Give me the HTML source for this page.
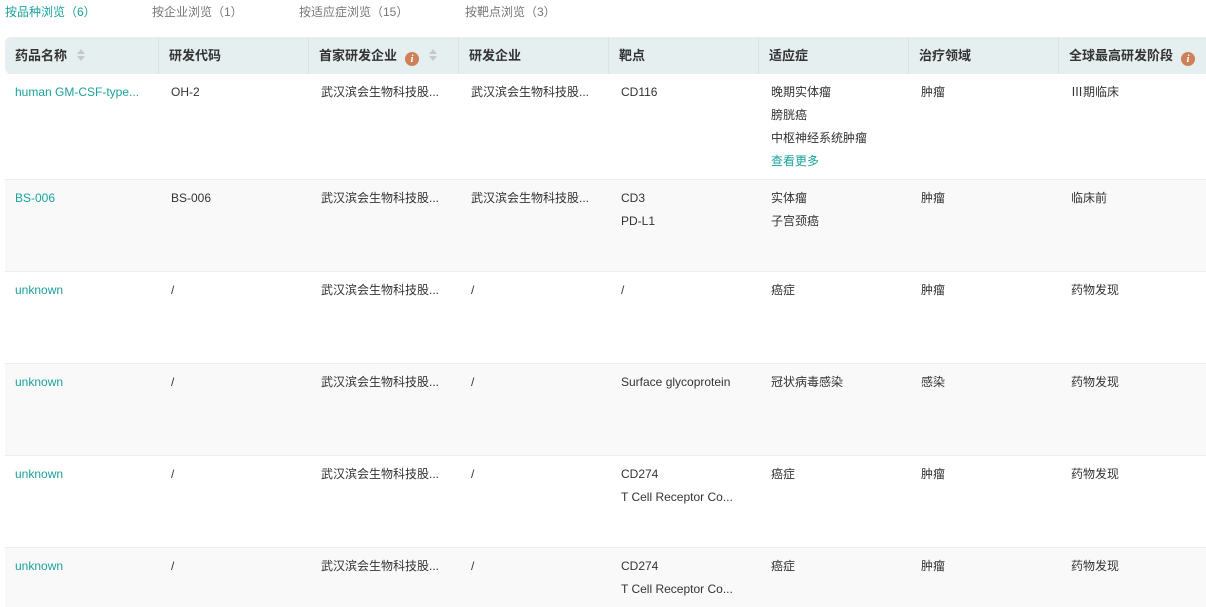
<!DOCTYPE html>
<html><head><meta charset="utf-8"><style>
*{margin:0;padding:0;box-sizing:border-box}
html,body{width:1206px;height:607px;overflow:hidden}
body{background:#fff;font-family:"Liberation Sans","Noto Sans CJK SC",sans-serif;font-size:12px;color:#333;position:relative}
.tabs{position:absolute;top:3px;left:5px;height:16px;font-size:12px;color:#777}
.tabs span{position:absolute;white-space:nowrap;top:0}
.hdr{position:absolute;top:37px;left:5px;width:1201px;height:37px;background:#e5eff0;border-radius:6px 0 0 6px}
.hc{position:absolute;top:0;height:37px;line-height:37px;font-size:13px;font-weight:bold;color:#333;padding-left:10px;border-left:1px solid #d6e6e6;white-space:nowrap}
.hc:first-child{border-left:none}
.info{display:inline-block;width:14px;height:14px;border-radius:50%;background:#d08058;color:#fff;font-size:11px;font-style:italic;font-weight:bold;line-height:14px;text-align:center;vertical-align:-2px;margin-left:8px;font-family:"Liberation Serif",serif}
.sort{display:inline-block;width:8px;height:12px;margin-left:10px;vertical-align:-1px;position:relative}
.sort:before{content:"";position:absolute;top:0;left:0;border:4px solid transparent;border-bottom:5px solid #c4c8cc;border-top:0}
.sort:after{content:"";position:absolute;bottom:0;left:0;border:4px solid transparent;border-top:5px solid #c4c8cc;border-bottom:0}
.row{position:absolute;left:5px;width:1201px;border-top:1px solid #ebedf0}
.row.g{background:#f9f9fa}
.c{position:absolute;top:7px;line-height:23px;white-space:nowrap}
.l{color:#1aa39b}
</style></head><body>
<div class="tabs">
<span style="left:0;color:#1aa39b">按品种浏览（6）</span>
<span style="left:147px">按企业浏览（1）</span>
<span style="left:294px">按适应症浏览（15）</span>
<span style="left:460px">按靶点浏览（3）</span>
</div>
<div class="hdr">
<div class="hc" style="left:0;width:153px">药品名称<span class="sort"></span></div>
<div class="hc" style="left:153px;width:150px">研发代码</div>
<div class="hc" style="left:303px;width:150px">首家研发企业<span class="info">i</span><span class="sort"></span></div>
<div class="hc" style="left:453px;width:150px">研发企业</div>
<div class="hc" style="left:603px;width:150px">靶点</div>
<div class="hc" style="left:753px;width:150px">适应症</div>
<div class="hc" style="left:903px;width:150px">治疗领域</div>
<div class="hc" style="left:1053px;width:148px">全球最高研发阶段<span class="info">i</span></div>
</div>

<div class="row" style="top:74px;height:105px;border-top:none">
<div class="c l" style="left:10px">human GM-CSF-type...</div>
<div class="c" style="left:166px">OH-2</div>
<div class="c" style="left:316px">武汉滨会生物科技股...</div>
<div class="c" style="left:466px">武汉滨会生物科技股...</div>
<div class="c" style="left:616px">CD116</div>
<div class="c" style="left:766px">晚期实体瘤<br>膀胱癌<br>中枢神经系统肿瘤<br><span class="l">查看更多</span></div>
<div class="c" style="left:916px">肿瘤</div>
<div class="c" style="left:1066px">Ⅲ期临床</div>
</div>

<div class="row g" style="top:179px;height:92px">
<div class="c l" style="left:10px">BS-006</div>
<div class="c" style="left:166px">BS-006</div>
<div class="c" style="left:316px">武汉滨会生物科技股...</div>
<div class="c" style="left:466px">武汉滨会生物科技股...</div>
<div class="c" style="left:616px">CD3<br>PD-L1</div>
<div class="c" style="left:766px">实体瘤<br>子宫颈癌</div>
<div class="c" style="left:916px">肿瘤</div>
<div class="c" style="left:1066px">临床前</div>
</div>

<div class="row" style="top:271px;height:92px">
<div class="c l" style="left:10px">unknown</div>
<div class="c" style="left:166px">/</div>
<div class="c" style="left:316px">武汉滨会生物科技股...</div>
<div class="c" style="left:466px">/</div>
<div class="c" style="left:616px">/</div>
<div class="c" style="left:766px">癌症</div>
<div class="c" style="left:916px">肿瘤</div>
<div class="c" style="left:1066px">药物发现</div>
</div>

<div class="row g" style="top:363px;height:92px">
<div class="c l" style="left:10px">unknown</div>
<div class="c" style="left:166px">/</div>
<div class="c" style="left:316px">武汉滨会生物科技股...</div>
<div class="c" style="left:466px">/</div>
<div class="c" style="left:616px">Surface glycoprotein</div>
<div class="c" style="left:766px">冠状病毒感染</div>
<div class="c" style="left:916px">感染</div>
<div class="c" style="left:1066px">药物发现</div>
</div>

<div class="row" style="top:455px;height:92px">
<div class="c l" style="left:10px">unknown</div>
<div class="c" style="left:166px">/</div>
<div class="c" style="left:316px">武汉滨会生物科技股...</div>
<div class="c" style="left:466px">/</div>
<div class="c" style="left:616px">CD274<br>T Cell Receptor Co...</div>
<div class="c" style="left:766px">癌症</div>
<div class="c" style="left:916px">肿瘤</div>
<div class="c" style="left:1066px">药物发现</div>
</div>

<div class="row g" style="top:547px;height:60px">
<div class="c l" style="left:10px">unknown</div>
<div class="c" style="left:166px">/</div>
<div class="c" style="left:316px">武汉滨会生物科技股...</div>
<div class="c" style="left:466px">/</div>
<div class="c" style="left:616px">CD274<br>T Cell Receptor Co...</div>
<div class="c" style="left:766px">癌症</div>
<div class="c" style="left:916px">肿瘤</div>
<div class="c" style="left:1066px">药物发现</div>
</div>
</body></html>
